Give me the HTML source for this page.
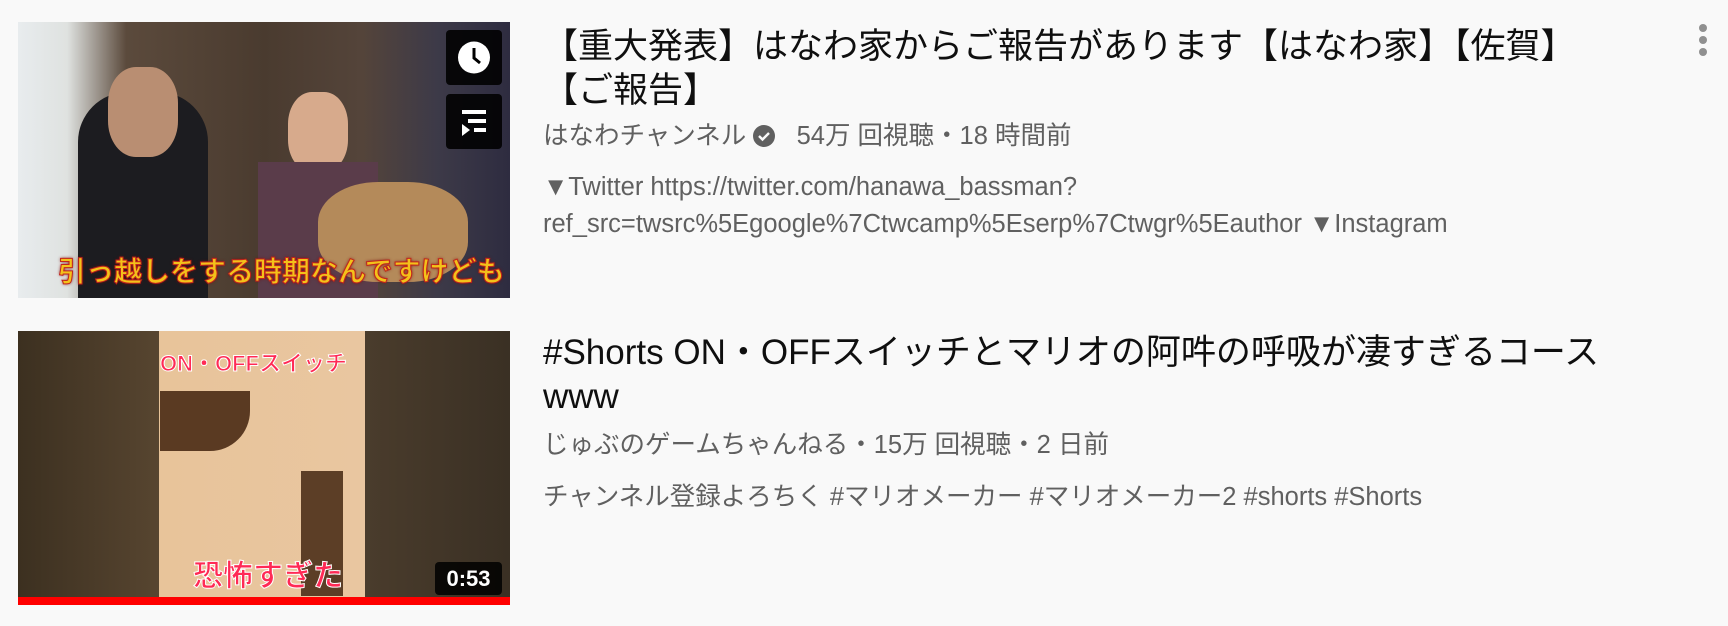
<!DOCTYPE html>
<html><head><meta charset="utf-8"><style>
*{margin:0;padding:0;box-sizing:border-box}
body{width:1728px;height:626px;background:#f9f9f9;font-family:"Liberation Sans","Noto Sans CJK JP",sans-serif;position:relative;overflow:hidden}
.th{position:absolute;left:18px;width:492px;overflow:hidden}
.t{position:absolute;left:543px;color:#0f0f0f;font-size:35px;line-height:44px;width:1130px;white-space:nowrap}
.m{position:absolute;left:543px;color:#606060;font-size:25.5px;line-height:30px;white-space:nowrap}
.btn{position:absolute;left:446px;width:56px;height:55px;background:rgba(0,0,0,.88);border-radius:4px}
</style></head><body>
<div class="th" style="top:22px;height:276px;background:linear-gradient(90deg,#e8ecee 0,#dfe2e0 10%,#5b4a3c 22%,#4a3b2f 50%,#54443a 70%,#3d3a48 85%,#2e2c40 100%)">
 <div style="position:absolute;left:60px;top:70px;width:130px;height:206px;background:#1c1c20;border-radius:50px 50px 0 0"></div>
 <div style="position:absolute;left:90px;top:45px;width:70px;height:90px;background:#b98e72;border-radius:40%"></div>
 <div style="position:absolute;left:270px;top:70px;width:60px;height:80px;background:#d7aa8c;border-radius:40%"></div>
 <div style="position:absolute;left:240px;top:140px;width:120px;height:136px;background:#5a3c4a"></div>
 <div style="position:absolute;left:300px;top:160px;width:150px;height:100px;background:#b48a5a;border-radius:40%"></div>
 <div style="position:absolute;left:40px;top:228px;font-size:28px;font-weight:bold;color:#f3c21a;-webkit-text-stroke:1px #c3241b;text-shadow:0 0 3px #7a0d0d;white-space:nowrap">引っ越しをする時期なんですけども</div>
</div>
<div class="btn" style="top:30px"><svg width="56" height="55" viewBox="0 0 56 55"><circle cx="28" cy="27.5" r="16" fill="#fff"/><path d="M28 18v10l6 5" stroke="#000" stroke-width="3" fill="none"/></svg></div>
<div class="btn" style="top:94px"><svg width="56" height="55" viewBox="0 0 56 55"><rect x="16" y="16" width="24" height="4" fill="#fff"/><rect x="22" y="25" width="18" height="4" fill="#fff"/><rect x="28" y="34" width="12" height="4" fill="#fff"/><path d="M16 30v12l8-6z" fill="#fff"/></svg></div>
<div class="t" style="top:25px">【重大発表】はなわ家からご報告があります【はなわ家】【佐賀】<br>【ご報告】</div>
<div class="m" style="top:121px">はなわチャンネル <span style="display:inline-block;width:22px;height:22px;border-radius:50%;background:#606060;vertical-align:-3px;position:relative"><svg width="22" height="22" style="position:absolute;left:0;top:0"><path d="M6 11l3.5 3.5L16 8" stroke="#f9f9f9" stroke-width="2.4" fill="none"/></svg></span>&nbsp;&nbsp; 54万 回視聴・18 時間前</div>
<div class="m" style="top:172px">▼Twitter https://twitter.com/hanawa_bassman?</div>
<div class="m" style="top:209px">ref_src=twsrc%5Egoogle%7Ctwcamp%5Eserp%7Ctwgr%5Eauthor ▼Instagram</div>
<svg style="position:absolute;left:1695px;top:22px" width="16" height="36"><circle cx="8" cy="6" r="4" fill="#909090"/><circle cx="8" cy="18" r="4" fill="#909090"/><circle cx="8" cy="30" r="4" fill="#909090"/></svg>

<div class="th" style="top:331px;height:266px;background:linear-gradient(90deg,#3c3020 0,#574530 28.7%,#e8c49a 28.7%,#e9c6a0 70.5%,#4a3c2c 70.5%,#3a3024 100%)">
 <div style="position:absolute;left:142px;top:60px;width:90px;height:60px;background:#5a3a22;border-radius:0 0 40px 0"></div>
 <div style="position:absolute;left:283px;top:140px;width:42px;height:125px;background:#5c3e26"></div>
 <div style="position:absolute;left:142px;top:15px;font-size:22px;font-weight:bold;color:#ff2a55;-webkit-text-stroke:1px #fff;white-space:nowrap">ON・OFFスイッチ</div>
 <div style="position:absolute;left:175px;top:220px;font-size:30px;font-weight:bold;color:#ff2a55;-webkit-text-stroke:1px #fff;white-space:nowrap">恐怖すぎた</div>
</div>
<div style="position:absolute;left:18px;top:597px;width:492px;height:8px;background:#f00"></div>
<div style="position:absolute;left:435px;top:562px;width:67px;height:33px;background:rgba(0,0,0,.85);border-radius:4px;color:#fff;font-size:22px;font-weight:bold;line-height:33px;text-align:center">0:53</div>
<div class="t" style="top:331px">#Shorts ON・OFFスイッチとマリオの阿吽の呼吸が凄すぎるコース<br>www</div>
<div class="m" style="top:430px">じゅぶのゲームちゃんねる・15万 回視聴・2 日前</div>
<div class="m" style="top:482px">チャンネル登録よろちく #マリオメーカー #マリオメーカー2 #shorts #Shorts</div>
</body></html>
